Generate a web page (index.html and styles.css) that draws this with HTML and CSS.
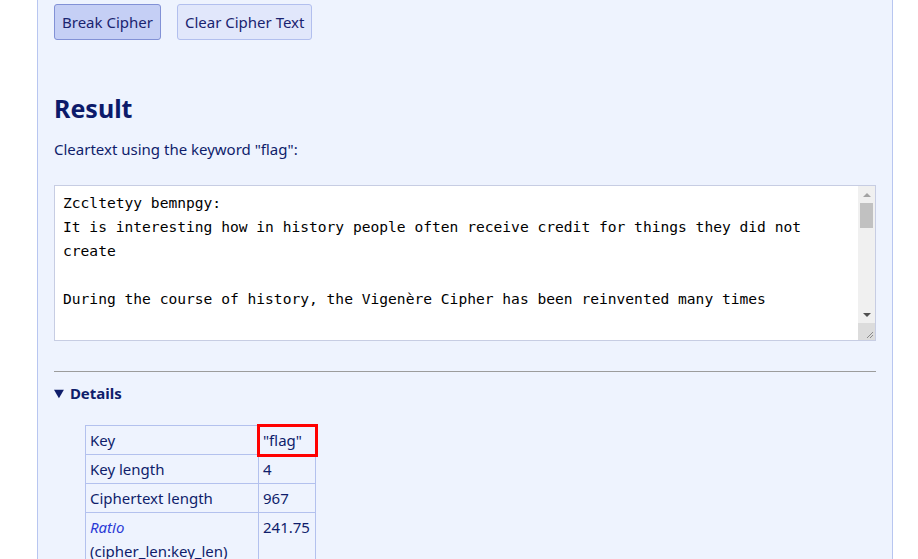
FILE: index.html
```html
<!DOCTYPE html>
<html lang="en">
<head>
<meta charset="utf-8">
<title>Vigenère Cipher Breaker</title>
<link rel="stylesheet" href="styles.css">
</head>
<body>
<main class="panel">
  <div class="actions">
    <button class="btn btn-primary">Break Cipher</button>
    <button class="btn btn-secondary">Clear Cipher Text</button>
  </div>

  <h2 class="result-title">Result</h2>
  <p class="result-note">Cleartext using the keyword "flag":</p>

  <div class="textbox">
    <div class="textbox-content">Zccltetyy bemnpgy:
It is interesting how in history people often receive credit for things they did not create

During the course of history, the Vigenère Cipher has been reinvented many times</div>
    <div class="scrollbar">
      <div class="sb-btn"><span class="tri-up"></span></div>
      <div class="sb-track"><div class="sb-thumb"></div></div>
      <div class="sb-btn"><span class="tri-down"></span></div>
      <div class="sb-corner">
        <svg width="17" height="17" viewBox="0 0 17 17"><path d="M15 9 L9 15 M15 12 L12 15" stroke="#8a8a8a" stroke-width="1"/></svg>
      </div>
    </div>
  </div>

  <hr class="divider">

  <details class="details" open>
    <summary class="details-summary">Details</summary>
    <table class="details-table">
      <tr><td class="label">Key</td><td class="value highlight">"flag"</td></tr>
      <tr><td class="label">Key length</td><td class="value">4</td></tr>
      <tr><td class="label">Ciphertext length</td><td class="value">967</td></tr>
      <tr><td class="label"><em class="ratio">Ratio</em><br>(cipher_len:key_len)</td><td class="value">241.75</td></tr>
    </table>
  </details>
</main>
</body>
</html>
```
FILE: styles.css
```css
html, body {
  margin: 0;
  padding: 0;
  background: #ffffff;
  overflow: hidden;
}

body {
  font-family: "Noto Sans", "Open Sans", sans-serif;
  font-size: 15px;
  color: #0f1d6b;
}

.panel {
  margin-left: 37px;
  width: 822px;
  padding: 4px 16px 40px 16px;
  background: #eef3fe;
  border-left: 1px solid #b8c6f0;
  border-right: 1px solid #b8c6f0;
  min-height: 600px;
}

.actions {
  display: flex;
  gap: 16px;
}

.btn {
  font-family: inherit;
  font-size: 15px;
  color: #1a2470;
  height: 36px;
  padding: 0 7px;
  border-radius: 3px;
  cursor: pointer;
}

.btn-primary {
  background: #c5cff5;
  border: 1px solid #8291d6;
}

.btn-secondary {
  background: #e1e7fb;
  border: 1px solid #b2bfee;
}

.result-title {
  font-size: 25px;
  font-weight: 700;
  color: #0c1a6a;
  margin: 50px 0 0 0;
  line-height: 36px;
}

.result-note {
  margin: 13px 0 0 0;
  line-height: 20px;
}

.textbox {
  margin-top: 26px;
  display: flex;
  height: 154px;
  background: #ffffff;
  border: 1px solid #c7cde3;
}

.textbox-content {
  flex: 1;
  overflow: hidden;
  white-space: pre-wrap;
  font-family: "DejaVu Sans Mono", "Liberation Mono", monospace;
  font-size: 14.6px;
  line-height: 24px;
  color: #000000;
  padding: 5px 8px 0 8px;
}

.scrollbar {
  width: 17px;
  display: flex;
  flex-direction: column;
  background: #f0f0f0;
}

.sb-btn {
  height: 17px;
  display: flex;
  align-items: center;
  justify-content: center;
}

.tri-up {
  width: 0;
  height: 0;
  border-left: 4px solid transparent;
  border-right: 4px solid transparent;
  border-bottom: 4px solid #a3a3a3;
}

.tri-down {
  width: 0;
  height: 0;
  border-left: 4px solid transparent;
  border-right: 4px solid transparent;
  border-top: 4px solid #505050;
}

.sb-track {
  flex: 1;
  padding: 0 2px;
}

.sb-thumb {
  height: 25px;
  background: #c1c1c1;
}

.sb-corner {
  height: 17px;
  background: #dcdcdc;
}

.sb-corner svg {
  display: block;
}

.divider {
  margin: 30px 0 0 0;
  border: 0;
  border-top: 1px solid #9c9c9c;
  height: 0;
}

.details {
  margin-top: 11px;
}

.details-summary {
  font-weight: 700;
  line-height: 20px;
  cursor: pointer;
}

.details-table {
  margin: 22px 0 0 31px;
  border-collapse: collapse;
}

.details-table td {
  border: 1px solid #b3c1ee;
  padding: 2px 4px 2px 4px;
  line-height: 24px;
  vertical-align: top;
}

.label {
  width: 164px;
}

.value {
  width: 48px;
}

.ratio {
  color: #2b3ad6;
}

.highlight {
  outline: 3px solid #ff0000;
  outline-offset: -1px;
}
```
